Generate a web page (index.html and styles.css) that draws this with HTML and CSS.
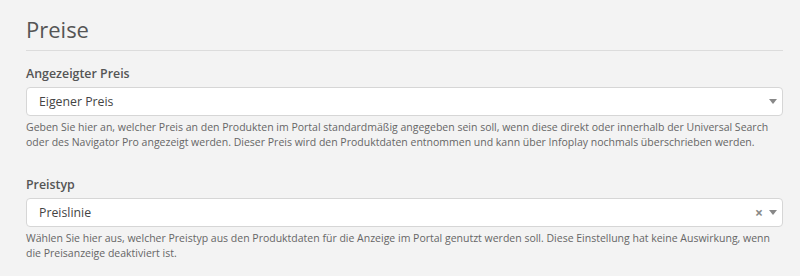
FILE: index.html
```html
<!DOCTYPE html>
<html lang="de">
<head>
  <meta charset="UTF-8">
  <title>Preise</title>
  <link rel="stylesheet" href="styles.css">
</head>
<body>
  <div class="section">
    <h2 class="section-title">Preise</h2>

    <div class="field">
      <label class="field-label">Angezeigter Preis</label>
      <div class="select">
        <span class="select-value">Eigener Preis</span>
        <span class="select-arrow"></span>
      </div>
      <p class="field-help">Geben Sie hier an, welcher Preis an den Produkten im Portal standardmäßig angegeben sein soll, wenn diese direkt oder innerhalb der Universal Search oder des Navigator Pro angezeigt werden. Dieser Preis wird den Produktdaten entnommen und kann über Infoplay nochmals überschrieben werden.</p>
    </div>

    <div class="field">
      <label class="field-label">Preistyp</label>
      <div class="select">
        <span class="select-value">Preislinie</span>
        <span class="select-clear">×</span>
        <span class="select-arrow"></span>
      </div>
      <p class="field-help">Wählen Sie hier aus, welcher Preistyp aus den Produktdaten für die Anzeige im Portal genutzt werden soll. Diese Einstellung hat keine Auswirkung, wenn die Preisanzeige deaktiviert ist.</p>
    </div>
  </div>
</body>
</html>
```

FILE: styles.css
```css
body {
  margin: 0;
  background-color: #f3f3f3;
  color: #555;
  font-family: 'Open Sans', sans-serif;
}

.section {
  padding: 14px 17px 0 26px;
}

.section-title {
  margin: 0;
  padding-bottom: 6px;
  font-size: 22px;
  font-weight: 400;
  line-height: 30px;
  color: #555;
  border-bottom: 1px solid #dcdcdc;
}

.field {
  margin-top: 14px;
}

.field + .field {
  margin-top: 26px;
}

.field-label {
  display: block;
  font-size: 12.4px;
  font-weight: 600;
  line-height: 18px;
  color: #555;
  margin-bottom: 4px;
}

.select {
  display: flex;
  align-items: center;
  height: 27px;
  padding: 0 5px 0 12px;
  background-color: #fff;
  border: 1px solid #d6d6d6;
  border-radius: 4px;
}

.select-value {
  flex: 1;
  font-size: 12.3px;
  color: #444;
}

.select-clear {
  font-size: 14px;
  font-weight: 700;
  color: #888;
  margin-right: 6px;
}

.select-arrow {
  width: 0;
  height: 0;
  border-left: 4px solid transparent;
  border-right: 4px solid transparent;
  border-top: 5px solid #888;
}

.field-help {
  margin: 4px 0 0;
  font-size: 10.5px;
  line-height: 15px;
  color: #666;
}
```
